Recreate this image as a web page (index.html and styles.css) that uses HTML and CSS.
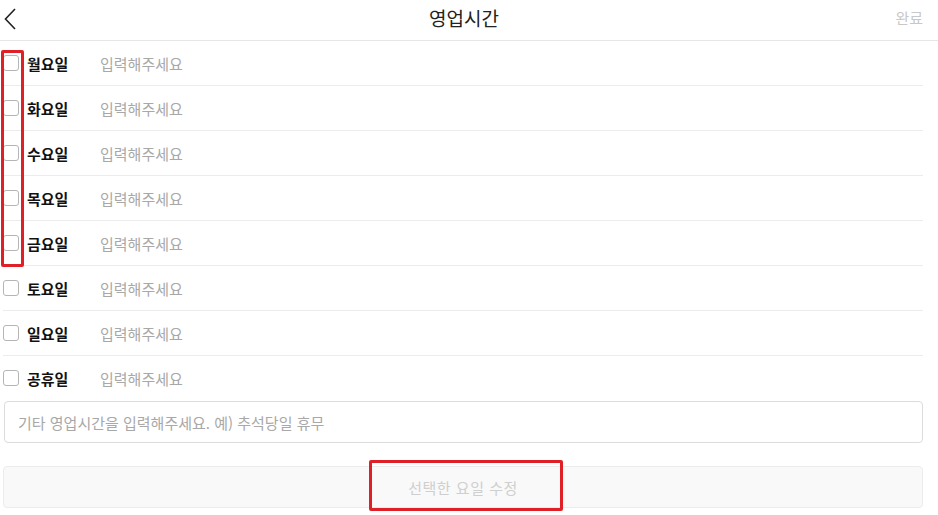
FILE: index.html
```html
<!DOCTYPE html>
<html lang="ko">
<head>
<meta charset="utf-8">
<title>영업시간</title>
<link rel="stylesheet" href="styles.css">
</head>
<body>
<div class="page">
  <header class="header">
    <button class="back" aria-label="뒤로">
      <svg width="12" height="22" viewBox="0 0 12 22"><path d="M11 1 L1.5 11 L11 21" fill="none" stroke="#222" stroke-width="1.6"/></svg>
    </button>
    <h1 class="title">영업시간</h1>
    <span class="done">완료</span>
  </header>
  <main class="content">
    <ul class="days">
      <li class="day"><span class="check"></span><span class="name">월요일</span><span class="ph">입력해주세요</span></li>
      <li class="day"><span class="check"></span><span class="name">화요일</span><span class="ph">입력해주세요</span></li>
      <li class="day"><span class="check"></span><span class="name">수요일</span><span class="ph">입력해주세요</span></li>
      <li class="day"><span class="check"></span><span class="name">목요일</span><span class="ph">입력해주세요</span></li>
      <li class="day"><span class="check"></span><span class="name">금요일</span><span class="ph">입력해주세요</span></li>
      <li class="day"><span class="check"></span><span class="name">토요일</span><span class="ph">입력해주세요</span></li>
      <li class="day"><span class="check"></span><span class="name">일요일</span><span class="ph">입력해주세요</span></li>
      <li class="day last"><span class="check"></span><span class="name">공휴일</span><span class="ph">입력해주세요</span></li>
    </ul>
    <div class="etc">기타 영업시간을 입력해주세요. 예) 추석당일 휴무</div>
    <div class="submit">선택한 요일 수정</div>
  </main>
  <div class="mark mark-days"></div>
  <div class="mark mark-btn"></div>
</div>
</body>
</html>
```
FILE: styles.css
```css
html, body {
  margin: 0;
  padding: 0;
  background: #fff;
}
body {
  font-family: "Noto Sans CJK KR", "Noto Sans", sans-serif;
  color: #111;
  width: 938px;
  height: 515px;
  overflow: hidden;
}
.page {
  position: relative;
  width: 938px;
  height: 515px;
}
.header {
  height: 40px;
  border-bottom: 1px solid #e6e6e6;
  display: flex;
  align-items: center;
  justify-content: space-between;
  padding: 0 15px 0 4px;
  position: relative;
}
.back {
  border: 0;
  background: none;
  padding: 0;
  width: 14px;
  height: 24px;
  display: flex;
  align-items: center;
  margin-top: -3px;
}
.title {
  position: absolute;
  left: 0;
  right: 10px;
  text-align: center;
  margin: 0;
  font-size: 19px;
  font-weight: 400;
  color: #222;
  pointer-events: none;
  margin-top: -5px;
}
.done {
  font-size: 15px;
  color: #c8c8c8;
  margin-top: -5px;
}
.content {
  padding: 0 15px 0 3px;
}
.days {
  list-style: none;
  margin: 0;
  padding: 0;
}
.day {
  height: 44px;
  border-bottom: 1px solid #ececec;
  display: flex;
  align-items: center;
}
.day.last {
  border-bottom: 0;
}
.check {
  width: 14px;
  height: 14px;
  border: 1px solid #b5b5b5;
  border-radius: 3px;
  box-sizing: content-box;
  margin-right: 8px;
  flex: none;
}
.name {
  font-size: 15px;
  font-weight: 700;
  width: 73px;
  color: #111;
}
.ph {
  font-size: 15px;
  color: #a8a8a8;
}
.etc {
  margin: 1px 0 0 1px;
  height: 40px;
  border: 1px solid #dcdcdc;
  border-radius: 4px;
  display: flex;
  align-items: center;
  padding-left: 13px;
  font-size: 15px;
  color: #a8a8a8;
}
.submit {
  margin-top: 23px;
  height: 40px;
  border: 1px solid #ececec;
  border-radius: 4px;
  background: #f9f9f9;
  display: flex;
  align-items: center;
  justify-content: center;
  font-size: 15px;
  letter-spacing: 0.5px;
  color: #cfcfcf;
}
.mark {
  position: absolute;
  border: 3px solid #e02027;
  border-radius: 2px;
  box-sizing: border-box;
}
.mark-days {
  left: 1px;
  top: 50px;
  width: 23px;
  height: 217px;
}
.mark-btn {
  left: 369px;
  top: 460px;
  width: 194px;
  height: 51px;
}
```
